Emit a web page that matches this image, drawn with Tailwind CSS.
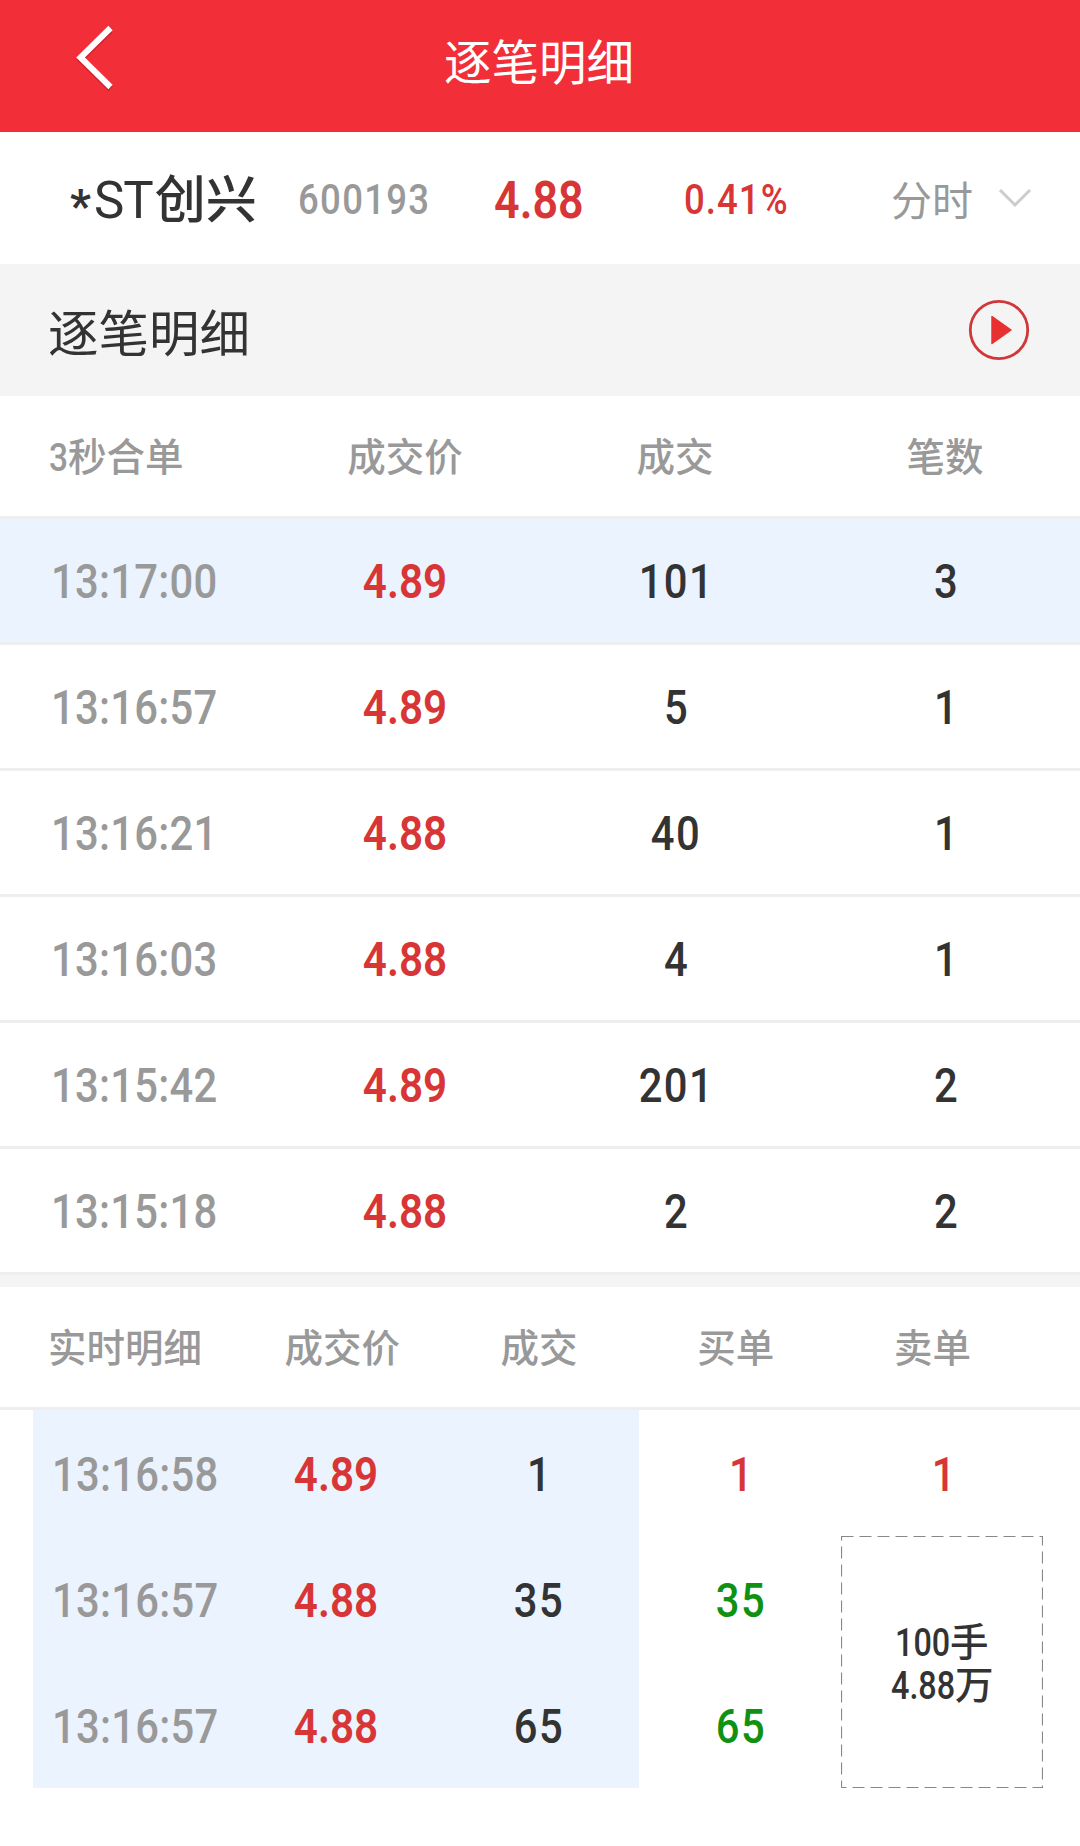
<!DOCTYPE html>
<html lang="zh-CN">
<head>
  <meta charset="UTF-8" />
  <meta name="viewport" content="width=device-width, initial-scale=1.0" />
  <title>逐笔明细</title>
  <script src="https://cdn.jsdelivr.net/npm/@tailwindcss/browser@4"></script>
  <style>
    body {
      font-family: Roboto, 'Noto Sans CJK SC', sans-serif;
    }
  </style>
</head>
<body class="w-[1080px] min-h-screen bg-white text-[#333] overflow-x-hidden">
  <!-- top bar -->
  <header class="relative flex h-[132px] items-center justify-center bg-[#f22f38] pb-[2px]">
    <svg class="absolute left-[70px] top-[20px]" width="50" height="76" viewBox="0 0 50 76" fill="none">
      <path d="M40.5 10.5 L10.5 39.5 L40.5 69" stroke="#a81c24" stroke-opacity="0.5" stroke-width="6" />
      <path d="M40.5 8 L10.5 37.5 L40.5 67" stroke="#fff" stroke-width="6" />
    </svg>
    <h1 class="mr-[2px] text-[47.5px] leading-none text-white">逐笔明细</h1>
  </header>

  <!-- stock summary -->
  <section class="flex h-[132px] items-center whitespace-nowrap leading-none">
    <div class="flex w-[227px] shrink-0 items-center pl-[70px] pt-[5px] text-[51px]">
      <span class="relative top-[5px] mr-[4px] w-[20px] text-[46px] font-bold">*</span><span class="mr-[2px] tracking-[-1px]">ST</span><span class="font-medium">创兴</span>
    </div>
    <div class="ml-[71px] w-[196px] shrink-0 pt-[4px] text-[42px] font-medium text-[#999]"><span class="inline-block origin-left scale-x-[0.87] tracking-[1.5px]">600193</span></div>
    <div class="w-[190px] shrink-0 pt-[5px] text-[51px] font-semibold text-[#d83636]"><span class="inline-block origin-left scale-x-[0.88]">4.88</span></div>
    <div class="w-[207px] shrink-0 pt-[4px] text-[42px] font-medium text-[#d83636]"><span class="inline-block origin-left scale-x-[0.87] tracking-[1.2px]">0.41%</span></div>
    <div class="shrink-0 pt-[8px] text-[41px] text-[#999]">分时</div>
    <svg class="ml-[25px]" width="34" height="22" viewBox="0 0 34 22" fill="none">
      <path d="M2 3 L17 18 L32 3" stroke="#ccc" stroke-width="3" />
    </svg>
  </section>

  <!-- section title -->
  <section class="flex h-[132px] items-center justify-between bg-[#f4f4f4] pl-[48px] pr-[50px]">
    <h2 class="pt-[10px] text-[50.5px] leading-none">逐笔明细</h2>
    <svg width="62" height="62" viewBox="0 0 62 62" fill="none">
      <circle cx="31" cy="31" r="28.7" stroke="#d0373a" stroke-width="2.8" />
      <path d="M24 17.5 L43 31 L24 44.5 Z" fill="#e93030" stroke="#e93030" stroke-width="1.5" stroke-linejoin="round" />
    </svg>
  </section>

  <!-- merged orders -->
  <section>
    <div class="grid h-[123px] grid-cols-4 items-center border-b-[3px] border-[#eeeeee] pt-[4px] text-center text-[38.5px] leading-none font-medium text-[#999]">
      <div class="pl-[49px] text-left"><span class="inline-block origin-left scale-x-[0.87] -mr-[3px]">3</span>秒合单</div>
      <div>成交价</div>
      <div>成交</div>
      <div>笔数</div>
    </div>
    <div id="merged"></div>
  </section>

  <div class="h-[12px] bg-[#f4f4f4]"></div>

  <!-- realtime orders -->
  <section>
    <div class="grid h-[123px] grid-cols-5 items-center border-b-[3px] border-[#eeeeee] px-[48px] pt-[4px] text-center text-[38.5px] leading-none font-medium text-[#999]">
      <div class="text-left">实时明细</div>
      <div class="pr-[2px]">成交价</div>
      <div class="pr-[2px]">成交</div>
      <div class="pr-[2px]">买单</div>
      <div class="pr-[2px]">卖单</div>
    </div>
    <div class="ml-[33px] grid w-[1010px] grid-cols-5 grid-rows-[126px_126px_126px]">
      <div id="realtime" class="col-span-4 row-span-3"></div>
      <div class="flex items-center justify-center pt-[4px] pl-[3px] text-[48px] font-medium leading-none text-[#d83636]"><span class="inline-block scale-x-[0.87]">1</span></div>
      <div class="relative row-span-2 flex flex-col items-center justify-center pt-[4px] text-[38.5px] leading-[43px] font-medium">
        <svg class="absolute inset-0" width="202" height="252" viewBox="0 0 202 252" fill="none">
          <path d="M0.5 0.5 H201.5 V251.5 H0.5 Z" stroke="#888" stroke-width="1.2" stroke-dasharray="12 6" />
        </svg>
        <div><span class="inline-block origin-left scale-x-[0.84] -mr-[11px]">100</span>手</div>
        <div><span class="inline-block origin-left scale-x-[0.84] -mr-[12px]">4.88</span>万</div>
      </div>
    </div>
  </section>

  <script>
    const merged = [
      ['13:17:00', '4.89', '101', '3'],
      ['13:16:57', '4.89', '5', '1'],
      ['13:16:21', '4.88', '40', '1'],
      ['13:16:03', '4.88', '4', '1'],
      ['13:15:42', '4.89', '201', '2'],
      ['13:15:18', '4.88', '2', '2']
    ];

    const realtime = [
      ['13:16:58', '4.89', '1', '1', 'text-[#d83636]'],
      ['13:16:57', '4.88', '35', '35', 'text-[#119111]'],
      ['13:16:57', '4.88', '65', '65', 'text-[#119111]']
    ];

    const time = t => `<span class="inline-block origin-left scale-x-[0.87] tracking-[0.3px] font-medium text-[#999]">${t}</span>`;
    const price = p => `<span class="inline-block scale-x-[0.88] font-semibold text-[#d83636]">${p}</span>`;
    const num = n => `<span class="inline-block scale-x-[0.87] tracking-[1.6px] font-medium">${n}</span>`;

    document.getElementById('merged').innerHTML = merged.map(([t, p, v, c], i) => `
      <div class="grid h-[126px] grid-cols-4 items-center border-b-[3px] border-[#eeeeee] pt-[2px] text-center text-[48px] leading-none ${i === 0 ? 'bg-[#ebf3fe]' : ''}">
        <div class="pl-[51px] text-left">${time(t)}</div>
        <div>${price(p)}</div>
        <div class="pl-[2px]">${num(v)}</div>
        <div class="pl-[2px]">${num(c)}</div>
      </div>`).join('');

    document.getElementById('realtime').innerHTML = realtime.map(([t, p, v, b, color]) => `
      <div class="grid h-[126px] grid-cols-4 text-center text-[48px] leading-none">
        <div class="col-span-3 grid grid-cols-3 items-center bg-[#ebf3fe] pt-[4px]">
          <div class="pl-[19px] text-left">${time(t)}</div>
          <div>${price(p)}</div>
          <div class="pl-[2px]">${num(v)}</div>
        </div>
        <div class="self-center pt-[4px] pl-[2px] font-medium ${color}">${num(b)}</div>
      </div>`).join('');
  </script>
</body>
</html>
